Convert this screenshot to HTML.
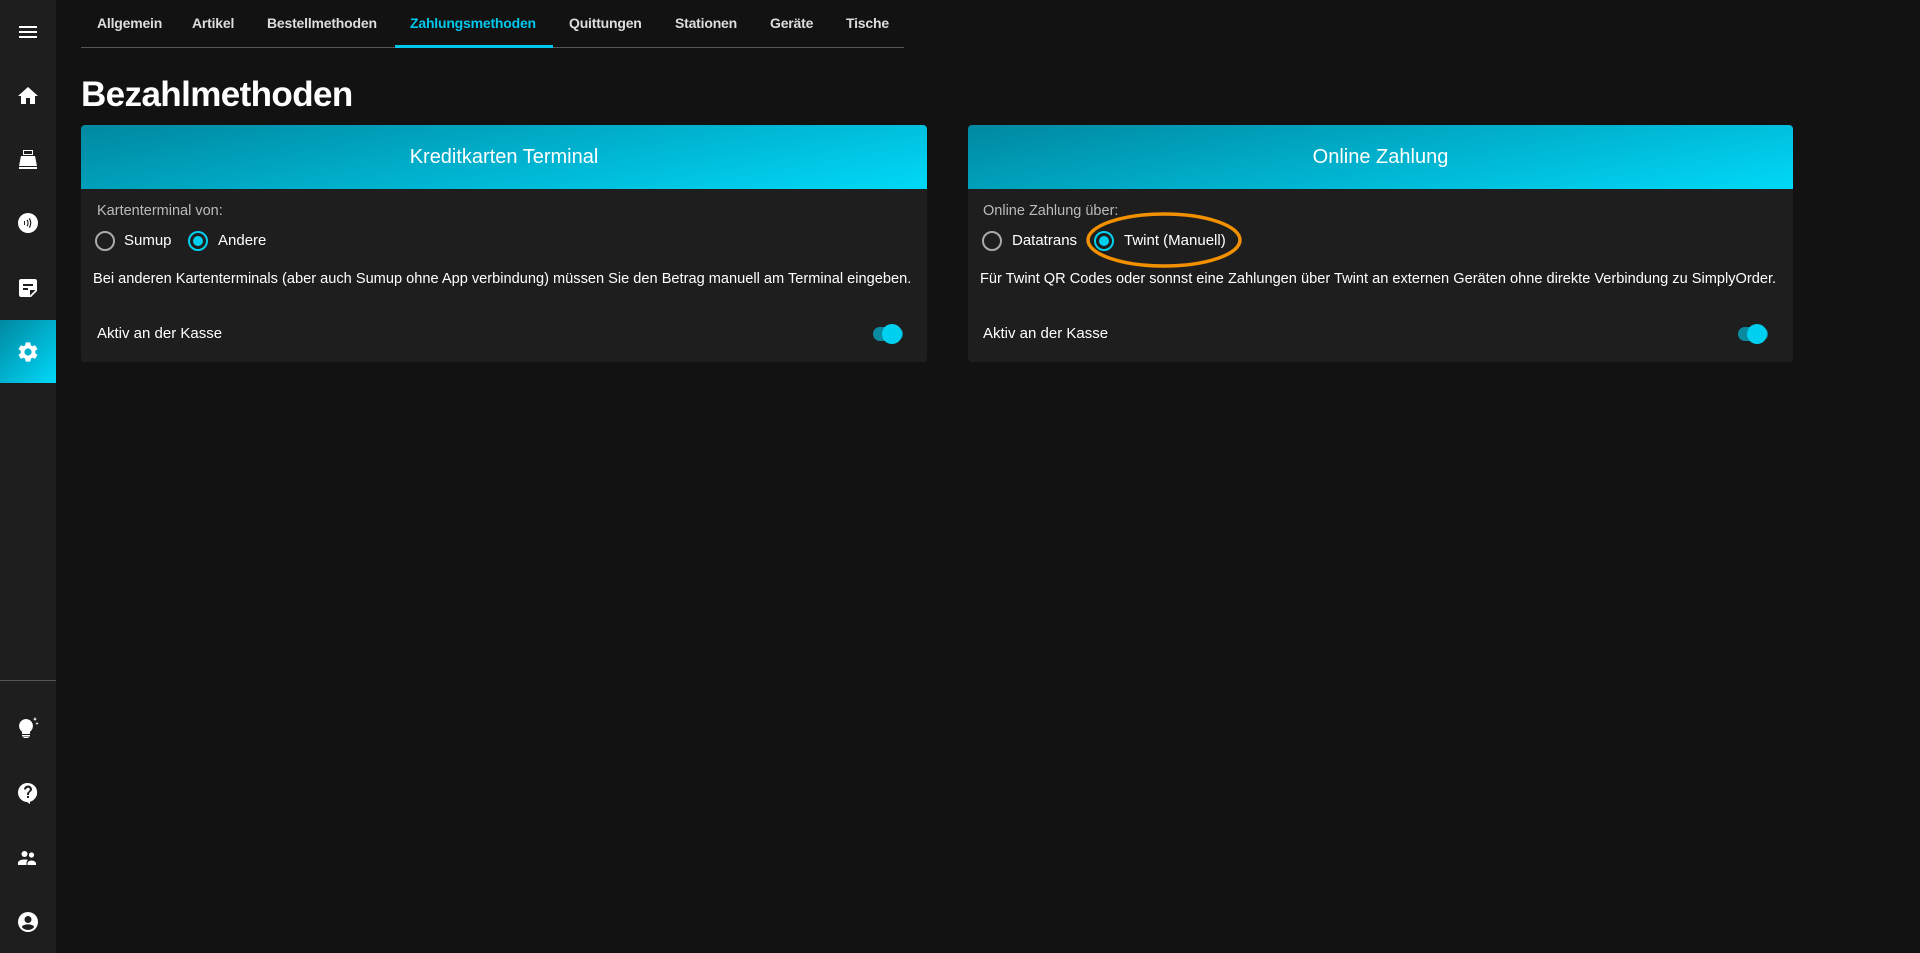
<!DOCTYPE html>
<html><head><meta charset="utf-8"><style>
*{box-sizing:border-box;margin:0;padding:0}
body{width:1920px;height:953px;background:#121212;font-family:"Liberation Sans",sans-serif;color:#fff;position:relative;overflow:hidden}
.side{position:absolute;left:0;top:0;width:56px;height:953px;background:#1e1e1e}
.ic{position:absolute;left:16px;width:24px;height:24px;fill:#fff}
.act{position:absolute;left:0;top:320px;width:56px;height:63px;background:linear-gradient(135deg,#0088a0,#00d8f8)}
.sep{position:absolute;left:0;top:680px;width:56px;height:1px;background:#555}
.tab{position:absolute;top:15px;font-size:14px;font-weight:bold;color:#ddd;white-space:nowrap;letter-spacing:-0.2px}
.tabline{position:absolute;left:81px;top:47px;width:823px;height:1px;background:#555}
.ul{position:absolute;left:395px;top:45px;width:158px;height:3px;background:#00c8ec}
h1{position:absolute;left:81px;top:75px;font-size:35px;font-weight:bold;letter-spacing:-0.6px}
.card{position:absolute;top:125px;height:237px;background:#1e1e1e;border-radius:4px;overflow:hidden}
.hd{height:64px;background:linear-gradient(170deg,#0088a0,#00d8f8);text-align:center;line-height:64px;font-size:20px}
.lbl{position:absolute;top:203px;font-size:14.5px;color:#bbb}
.rad{position:absolute;width:20px;height:20px;border:2px solid #aaa;border-radius:50%;top:231px}
.rad.on{border-color:#00d0f0}
.rad.on::after{content:"";position:absolute;left:3px;top:3px;width:10px;height:10px;border-radius:50%;background:#00d0f0}
.rt{position:absolute;top:232px;font-size:15px}
.desc{position:absolute;top:271px;font-size:14.6px;white-space:nowrap}
.ak{position:absolute;top:325px;font-size:15px}
.tr{position:absolute;top:327px;width:30px;height:14px;border-radius:7px;background:#0a8aa0}
.th{position:absolute;top:324px;width:20px;height:20px;border-radius:50%;background:#00d0f0}
</style></head><body>
<div class="side">
<svg class="ic" style="top:20px" viewBox="0 0 24 24"><path d="M3 18h18v-2H3v2zm0-5h18v-2H3v2zm0-7v2h18V6H3z"/></svg>
<svg class="ic" style="top:84px" viewBox="0 0 24 24"><path d="M10 20v-6h4v6h5v-8h3L12 3 2 12h3v8z"/></svg>
<svg class="ic" style="top:148px" viewBox="0 0 24 24"><path d="M7 2h10v5H7zM8 3v3h8V3zM5 8h14l2 10H3zM9 10h1v1H9zm3 0h1v1h-1zm3 0h1v1h-1zM9 13h1v1H9zm3 0h1v1h-1zm3 0h1v1h-1zM3 19h18v2H3z"/></svg>
<svg class="ic" style="top:211px" viewBox="0 0 24 24"><path d="M12 2a10 10 0 100 20 10 10 0 000-20zM9 14H8v-4h1zm2.5 1.5l-1-.6a5 5 0 000-5.8l1-.6a6 6 0 010 7zm2.3 1.5l-1-.7a8 8 0 000-8.6l1-.7a9 9 0 010 10z"/></svg>
<svg class="ic" style="top:276px" viewBox="0 0 24 24"><path d="M19 3H5c-1.1 0-2 .9-2 2v14c0 1.1.9 2 2 2h10l6-6V5c0-1.1-.9-2-2-2zM7 8h10v2H7zm5 6H7v-2h5zm2 5.5V14h5.5z"/></svg>
<div class="act"><svg class="ic" style="top:20px" viewBox="0 0 24 24"><path d="M19.14 12.94c.04-.3.06-.61.06-.94s-.02-.64-.07-.94l2.03-1.58a.49.49 0 00.12-.61l-1.92-3.32a.49.49 0 00-.59-.22l-2.39.96c-.5-.38-1.03-.7-1.620-.94l-.36-2.54a.48.48 0 00-.48-.41h-3.84a.47.47 0 00-.47.41l-.36 2.54c-.59.24-1.13.57-1.62.94l-2.39-.96a.48.48 0 00-.59.22L2.74 8.87a.47.47 0 00.12.61l2.03 1.58c-.05.3-.09.63-.09.94s.02.64.07.94l-2.03 1.58a.49.49 0 00-.12.61l1.92 3.32c.12.22.37.29.59.22l2.39-.96c.5.38 1.03.7 1.62.94l.36 2.54c.05.24.24.41.48.41h3.84c.24 0 .44-.17.47-.41l.36-2.54c.59-.24 1.13-.56 1.62-.94l2.39.96c.22.08.47 0 .59-.22l1.92-3.32a.47.47 0 00-.12-.61zM12 15.6A3.6 3.6 0 1112 8.4a3.6 3.6 0 010 7.2z"/></svg></div>
<div class="sep"></div>
<svg class="ic" style="top:716px" viewBox="0 0 24 24"><path d="M10 3a7 7 0 00-4 12.7V18h8v-2.3A7 7 0 0010 3zM6 19h8v1.5H6zm1.5 2h5v1h-5zM19 1l.7 1.6L21 3l-1.3.6L19 5l-.7-1.4L17 3l1.3-.4zM21 6l.5 1 1 .5-1 .5-.5 1-.5-1-1-.5 1-.5z"/></svg>
<svg class="ic" style="top:781px" viewBox="0 0 24 24"><path d="M12 2a9.5 9.5 0 00-1 19l3 2v-2.3A9.5 9.5 0 0012 2zm1 15h-2v-2h2zm1.6-6.4l-.9.9c-.6.6-.7 1.1-.7 2.5h-2v-.5c0-1.1.4-2 1.1-2.6l1.2-1.3a1.4 1.4 0 00.5-1.1 1.8 1.8 0 10-3.6 0H8a4 4 0 118 0c0 .8-.4 1.6-1.4 2.1z"/></svg>
<svg class="ic" style="top:846px" viewBox="0 0 24 24"><circle cx="8.5" cy="8" r="3"/><circle cx="15.5" cy="9" r="2.6"/><path d="M2 19v-2c0-2.2 3-3.5 6.5-3.5S12 14 12 14c-1 .8-1.5 2-1.5 3v2zM11.5 19v-1.5c0-2 2.5-3 4-3s4.5 1 4.5 3V19z"/></svg>
<svg class="ic" style="top:910px" viewBox="0 0 24 24"><path d="M12 2a10 10 0 100 20 10 10 0 000-20zm0 4a3.5 3.5 0 110 7 3.5 3.5 0 010-7zm0 14a8 8 0 01-6.2-3c.3-1.6 3.4-2.6 6.2-2.6s5.9 1 6.2 2.6A8 8 0 0112 20z"/></svg>
</div>
<div class="tab" style="left:97px">Allgemein</div>
<div class="tab" style="left:192px">Artikel</div>
<div class="tab" style="left:267px">Bestellmethoden</div>
<div class="tab" style="left:410px;color:#00c8ec">Zahlungsmethoden</div>
<div class="tab" style="left:569px">Quittungen</div>
<div class="tab" style="left:675px">Stationen</div>
<div class="tab" style="left:770px">Geräte</div>
<div class="tab" style="left:846px">Tische</div>
<div class="tabline"></div><div class="ul"></div>
<h1>Bezahlmethoden</h1>

<div class="card" style="left:81px;width:846px"><div class="hd">Kreditkarten Terminal</div></div>
<div class="lbl" style="left:97px">Kartenterminal von:</div>
<div class="rad" style="left:95px"></div><div class="rt" style="left:124px">Sumup</div>
<div class="rad on" style="left:188px"></div><div class="rt" style="left:218px">Andere</div>
<div class="desc" style="left:93px">Bei anderen Kartenterminals (aber auch Sumup ohne App verbindung) müssen Sie den Betrag manuell am Terminal eingeben.</div>
<div class="ak" style="left:97px">Aktiv an der Kasse</div>
<div class="tr" style="left:873px"></div><div class="th" style="left:882px"></div>

<div class="card" style="left:968px;width:825px"><div class="hd">Online Zahlung</div></div>
<div class="lbl" style="left:983px">Online Zahlung über:</div>
<div class="rad" style="left:982px"></div><div class="rt" style="left:1012px">Datatrans</div>
<div class="rad on" style="left:1094px"></div><div class="rt" style="left:1124px">Twint (Manuell)</div>
<svg style="position:absolute;left:1084px;top:210px" width="160" height="60"><ellipse cx="80" cy="30" rx="76" ry="26" fill="none" stroke="#f29100" stroke-width="3.5"/></svg>
<div class="desc" style="left:980px">Für Twint QR Codes oder sonnst eine Zahlungen über Twint an externen Geräten ohne direkte Verbindung zu SimplyOrder.</div>
<div class="ak" style="left:983px">Aktiv an der Kasse</div>
<div class="tr" style="left:1738px"></div><div class="th" style="left:1747px"></div>
</body></html>
